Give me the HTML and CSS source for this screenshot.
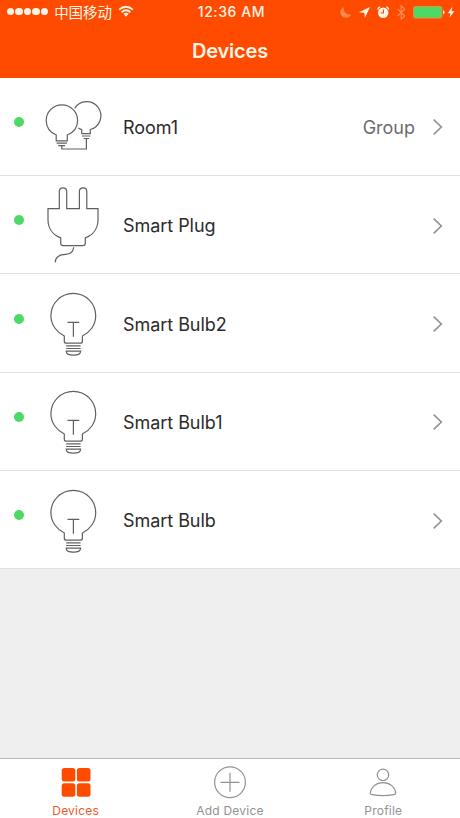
FILE: index.html
```html
<!DOCTYPE html>
<html lang="en">
<head>
<meta charset="utf-8">
<title>Devices</title>
<link rel="stylesheet" href="styles.css">
</head>
<body>
<svg width="0" height="0" class="defs">
  <symbol id="bulb" viewBox="42 274 64 98">
    <path d="M64.3 341.2v-5.2C57 332.5 50.9 325 50.9 315.7a22.4 22.4 0 0 1 44.8 0c0 9.3-5.8 16.8-13.3 20.3v5.2q0 2-2 2H66.300q-2 0-2-2zM67.500 322.300h11.800M73.400 322.300v14.400M66.200 345.900h14.400M66.200 348.500h14.400M66.200 351.200h14.400c0 5.200-14.400 5.200-14.400 0z"/>
  </symbol>
  <symbol id="chevron" viewBox="0 0 12 18"><path d="M1.700 1.700 9.300 9l-7.600 7.300"/></symbol>
</svg>
<div class="app">
  <header class="header">
    <div class="status">
      <div class="carrier">
        <span class="signal"><i></i><i></i><i></i><i></i><i></i></span>
        <span class="network">中国移动</span>
        <svg class="wifi" width="16" height="13" viewBox="0 0 16 13"><path class="arc" d="M1.200 4.600Q8-1.200 14.800 4.600M3.600 7.200Q8 3.500 12.400 7.200"/><path d="M5.400 8.800Q8 6.800 10.600 8.800L8 11.800z"/></svg>
      </div>
      <div class="time">12:36 AM</div>
      <svg class="indicators" width="120" height="22" viewBox="340 0 120 22">
        <path class="dim" d="M343.800 6a5.600 5.600 0 1 0 7.400 7.200A6 6 0 0 1 343.800 6z"/>
        <path class="solid" d="M370 6 359 11.200l5.300.5.500 5.300z"/>
        <circle class="solid" cx="383.200" cy="11.700" r="5.200"/>
        <path class="ear" d="M377.700 8.500q.5-2 2.400-2.600M388.700 8.500q-.5-2-2.400-2.600"/>
        <path class="hand" d="M383.400 8.500v3.500h-2.800"/>
        <path class="bt" d="m397.700 8 7 7-3.500 3.300V4.700l3.500 3.300-7 7"/>
        <rect class="case" x="413.700" y="5.500" width="28.100" height="11.500" rx="1.500"/>
        <path class="solid" d="M443 9.300q1.700.3 1.700 2t-1.700 2z"/>
        <path class="solid" d="m452.400 5.700-4.700 6.600h2.800l-1 4.500 4.800-6.500h-2.900z"/>
      </svg>
    </div>
    <h1>Devices</h1>
  </header>
  <main class="list">
    <div class="row">
      <span class="dot"></span>
      <svg class="device" viewBox="42 77.500 64 98"><path d="M56.200 141.300v-5.800C50.500 133 46.200 127.700 46.200 121a15.700 15.700 0 0 1 31.400 0c0 6.700-4.200 12-10.300 14.500v5.800zM74.600 108.800A14.200 14.200 0 1 1 90.300 130v4.200h-8.600v-4.100L78.300 128.500M56.600 143.600h10.300M58.200 146.200h6.900M61.800 146.500v3h24.600v-11M81.900 136.500h8.400M83.600 139h5.400"/></svg>
      <span class="name">Room1</span>
      <span class="kind">Group</span>
      <svg class="chevron"><use href="#chevron"/></svg>
    </div>
    <div class="row">
      <span class="dot"></span>
      <svg class="device" viewBox="42 175.700 64 98"><path d="M48 208.400h11.300v-17.200q0-3.700 3.700-3.700t3.700 3.700v17.200h12.700v-17.200q0-3.700 3.700-3.700t3.700 3.700v17.200H98v11c0 8.500-5 15.200-12.700 18.200v5.400q0 2.400-2.400 2.400H63.100q-2.400 0-2.400-2.400v-5.400C53 234.600 48 227.900 48 219.400zM73.700 247c-.5 4.300-3.200 7-8 7.100-5.700.1-10.300 2.600-10.600 8"/></svg>
      <span class="name">Smart Plug</span>
      <svg class="chevron"><use href="#chevron"/></svg>
    </div>
    <div class="row">
      <span class="dot"></span>
      <svg class="device"><use href="#bulb"/></svg>
      <span class="name">Smart Bulb2</span>
      <svg class="chevron"><use href="#chevron"/></svg>
    </div>
    <div class="row">
      <span class="dot"></span>
      <svg class="device"><use href="#bulb"/></svg>
      <span class="name">Smart Bulb1</span>
      <svg class="chevron"><use href="#chevron"/></svg>
    </div>
    <div class="row">
      <span class="dot"></span>
      <svg class="device"><use href="#bulb"/></svg>
      <span class="name">Smart Bulb</span>
      <svg class="chevron"><use href="#chevron"/></svg>
    </div>
  </main>
  <nav class="tabs">
    <a class="tab active">
      <svg width="34" height="34" viewBox="0 0 34 34"><rect x="1.700" y="2" width="13.600" height="13.600" rx="2.500"/><rect x="16.900" y="2" width="13.600" height="13.600" rx="2.500"/><rect x="1.700" y="17.200" width="13.600" height="13.600" rx="2.500"/><rect x="16.900" y="17.200" width="13.600" height="13.600" rx="2.500"/></svg>
      <span>Devices</span>
    </a>
    <a class="tab">
      <svg width="34" height="34" viewBox="0 0 34 34"><circle cx="17" cy="16.300" r="15.400"/><path d="M7.500 16.300h19M17 6.800v19"/></svg>
      <span>Add Device</span>
    </a>
    <a class="tab">
      <svg width="34" height="34" viewBox="0 0 34 34"><circle cx="17" cy="8.900" r="5.700"/><path d="M4.300 27.400C4.800 21 10.200 16.700 17 16.700s12.200 4.300 12.700 10.700q-.2 1.100-2 1.300-10.700 2-21.400 0-1.800-.2-2-1.300z"/></svg>
      <span>Profile</span>
    </a>
  </nav>
</div>
</body>
</html>
```
FILE: styles.css
```css
* { box-sizing: border-box; }
body {
  margin: 0;
  font-family: Inter, "Noto Sans CJK SC", sans-serif;
  background: #efefef;
}
.defs { display: block; }
.app {
  display: flex;
  flex-direction: column;
  width: 460px;
  height: 818px;
  background: #efefef;
}
.header {
  height: 77.700px;
  flex: none;
  background: #ff4b00;
  color: #fff4e6;
}
.status {
  display: grid;
  grid-template-columns: 170px 120px 1fr;
  align-items: center;
  height: 23px;
}
.carrier { display: flex; align-items: center; padding-left: 7px; }
.signal { display: flex; gap: 1.300px; }
.signal i { width: 7.200px; height: 7.200px; border-radius: 50%; background: #fff4e6; }
.network {
  margin-left: 6px;
  font: 14.500px/22px "Noto Sans CJK SC", sans-serif;
  white-space: nowrap;
}
.wifi { margin-left: 6px; fill: #fff4e6; }
.wifi .arc { fill: none; stroke: #fff4e6; stroke-width: 1.900; }
.time {
  padding-left: 3px;
  text-align: center;
  font-size: 14px;
  font-weight: 500;
  letter-spacing: .6px;
}
.indicators { justify-self: end; }
.solid { fill: #fff4e6; }
.dim { fill: #ff8850; }
.ear { fill: none; stroke: #fff4e6; stroke-width: 1.300; }
.hand { fill: none; stroke: #ff4b00; stroke-width: 1.200; }
.bt { fill: none; stroke: #ff8c58; stroke-width: 1.100; }
.case { fill: #4cd964; stroke: #d99a48; stroke-width: 1; }
h1 {
  margin: 14px 0 0;
  text-align: center;
  font-size: 20px;
  line-height: 29px;
  font-weight: 600;
  letter-spacing: -.2px;
}
.list { flex: none; }
.row {
  display: flex;
  align-items: center;
  height: 98.350px;
  padding-right: 16px;
  border-bottom: 1px solid #e1e1e1;
  background: #fff;
}
.dot {
  width: 10px;
  height: 10px;
  margin: 0 18px 9px 14px;
  border-radius: 50%;
  background: #4cd964;
}
.device {
  width: 64px;
  height: 98px;
  fill: none;
  stroke: #606063;
  stroke-width: 1.200;
}
.name {
  margin-left: 17px;
  padding-top: 3px;
  font-size: 18px;
  line-height: 24px;
  letter-spacing: -.05px;
  color: #2b2b2d;
}
.kind {
  margin-left: auto;
  margin-right: 17px;
  padding-top: 3px;
  font-size: 18px;
  line-height: 24px;
  color: #6c6c6f;
}
.chevron {
  width: 12px;
  height: 18px;
  margin-top: 2px;
  margin-left: auto;
  fill: none;
  stroke: #949496;
  stroke-width: 1.700;
}
.kind + .chevron { margin-left: 0; }
.tabs {
  display: grid;
  grid-template-columns: repeat(3, 1fr);
  height: 60px;
  margin-top: auto;
  border-top: 1px solid #b9b9b9;
  background: #fff;
}
.tab {
  display: flex;
  flex-direction: column;
  align-items: center;
  padding-top: 7px;
  color: #929292;
  font-size: 12px;
  line-height: 16px;
  letter-spacing: .22px;
}
.tab svg { fill: none; stroke: currentColor; stroke-width: 1.200; }
.tab span { margin-top: 3px; }
.active { color: #ff4b00; }
.active span { margin-right: 2px; color: #ef5a28; }
.active svg { fill: currentColor; stroke: none; }
```
